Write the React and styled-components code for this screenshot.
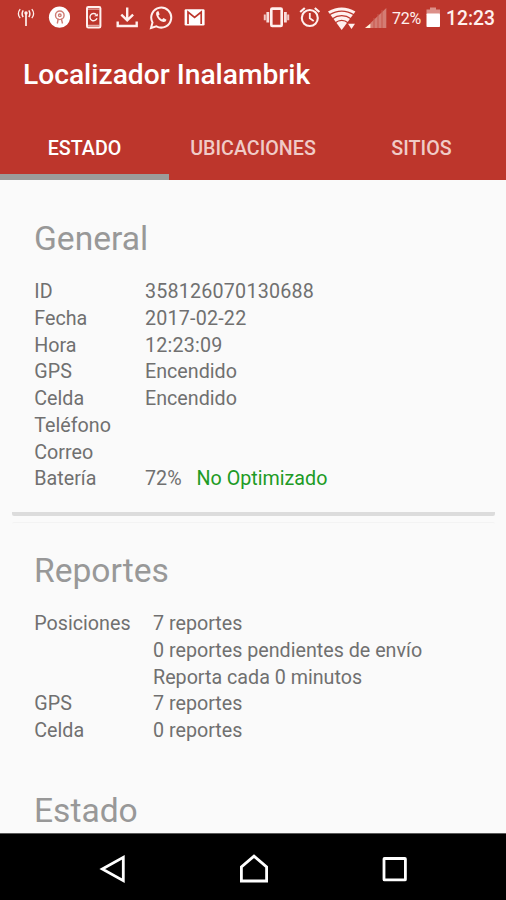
import React, { useState } from "react";
import styled, { createGlobalStyle } from "styled-components";

const GlobalStyle = createGlobalStyle`
    body {
        margin: 0;
        background: #fafafa;
        font-family: Roboto, "Liberation Sans", sans-serif;
    }
`;

/* Layout */
const Screen = styled.div`
    display: flex;
    flex-direction: column;
    width: 506px;
    height: 900px;
    overflow: hidden;
    background: #fafafa;
`;

const Header = styled.header`
    flex: none;
    height: 180px;
    background: #bd362c;
    color: #fff;
`;

const StatusBar = styled.div`
    display: flex;
    height: 36px;
`;

const Icon = styled.svg`
    flex: none;
    display: block;
    height: 36px;
    width: ${p => p.$w}px;
    margin-left: ${p => p.$gap || 0}px;
    fill: none;
    stroke: #fff0ee;
    stroke-width: 2;
`;

const StatusText = styled.span`
    box-sizing: border-box;
    width: ${p => p.$w}px;
    margin-left: ${p => p.$gap}px;
    padding-top: 1px;
    line-height: 36px;
    white-space: nowrap;
    color: #fff0ee;
    font-size: ${p => p.$size}px;
    font-weight: ${p => p.$weight || 400};
    letter-spacing: ${p => p.$track || 0}px;
`;

const Title = styled.h1`
    margin: 0;
    padding-left: 23px;
    height: 79px;
    line-height: 78px;
    font-size: 28.2px;
    font-weight: 500;
    white-space: nowrap;
`;

const Tabs = styled.nav`
    display: grid;
    grid-template-columns: 169px 168px 169px;
    height: 65px;
`;

const Tab = styled.button`
    box-sizing: border-box;
    padding: 8px 0 0;
    border: 0;
    border-bottom: 6px solid ${p => (p.$active ? "#9c9c9a" : "transparent")};
    background: none;
    color: ${p => (p.$active ? "#fff" : "#f0cbc7")};
    font: 500 19.7px/1 Roboto, sans-serif;
`;

const Content = styled.main`
    flex: 1;
    min-height: 0;
    overflow: hidden;
    padding: 10px 11px 0 12px;
`;

const Card = styled.section`
    box-sizing: border-box;
    height: ${p => p.$height}px;
    margin-bottom: ${p => p.$after}px;
    padding: 28px 22px 0;
    border-radius: 2px;
    border-top: 1px solid ${p => p.$edge || "#fafafa"};
    border-bottom: ${p => (p.$raised ? "4px solid #dcdcdc" : "0")};
`;

const Heading = styled.h2`
    margin: 0 0 20px;
    height: 40px;
    line-height: 40px;
    font-size: 33.6px;
    font-weight: 400;
    color: #989898;
`;

const Rows = styled.dl`
    display: grid;
    grid-template-columns: ${p => p.$label}px 1fr;
    grid-auto-rows: 26.7px;
    margin: 0;
    padding-top: 0.4px;
    font-size: 19.7px;
    line-height: 26.7px;
    color: #707070;
    white-space: nowrap;
`;

const Label = styled.dt`
    margin: 0;
    padding-left: 0.3px;
`;

const Value = styled.dd`
    margin: 0;
    letter-spacing: ${p => (p.$numeric ? 0.2 : 0)}px;
`;

const Good = styled.span`
    margin-left: 15px;
    color: #209b25;
`;

const NavBar = styled.footer`
    flex: none;
    display: flex;
    justify-content: space-between;
    align-items: center;
    box-sizing: border-box;
    height: 67px;
    padding: 4px 97px 0 99px;
    border-top: 1px solid #5a5a5a;
    background: #000;
`;

const NavButton = styled.button`
    padding: 0;
    border: 0;
    background: none;

    svg {
        display: block;
        width: 30px;
        height: 30px;
        fill: none;
        stroke: #fff;
        stroke-width: 2.8;
    }
`;

const tabs = ["ESTADO", "UBICACIONES", "SITIOS"];

const general = [
    ["ID", "358126070130688"],
    ["Fecha", "2017-02-22"],
    ["Hora", "12:23:09"],
    ["GPS", "Encendido"],
    ["Celda", "Encendido"],
    ["Teléfono", ""],
    ["Correo", ""],
    ["Batería", "72%", "No Optimizado"],
];

const reportes = [
    ["Posiciones", "7 reportes"],
    ["", "0 reportes pendientes de envío"],
    ["", "Reporta cada 0 minutos"],
    ["GPS", "7 reportes"],
    ["Celda", "0 reportes"],
];

const Status = function Status() {
    return <StatusBar>
        {/* antenna */}
        <Icon $w={18} $gap={17} viewBox="0 0 18 36">
            <path d="M3.2 9.2Q-0.4 13.7 3.2 18.2M14.8 9.2Q18.4 13.7 14.8 18.2" strokeWidth="1.3" />
            <path d="M6.2 10.3Q4 13.7 6.2 17M11.8 10.3Q14 13.7 11.8 17" strokeWidth="1.5" />
            <path d="M9 14V26" strokeWidth="1.7" />
            <circle cx="9" cy="13" r="1.7" fill="#fff0ee" stroke="none" />
        </Icon>
        {/* app badge */}
        <Icon $w={22} $gap={13} viewBox="0 0 22 36">
            <circle cx="11.5" cy="17.2" r="10.6" fill="#fff" stroke="none" />
            <g stroke="#cf7c74" strokeWidth="1.4">
                <circle cx="11.8" cy="15.3" r="4.3" />
                <circle cx="11.8" cy="15.3" r="1.3" />
                <path d="M10.3 18.5L9.3 23.5M13.3 18.5L14.5 23.5" />
            </g>
        </Icon>
        {/* phone */}
        <Icon $w={18} $gap={15} viewBox="0 0 18 36">
            <rect x="2" y="7" width="13.4" height="20.6" rx="1.3" strokeWidth="2" />
            <path d="M3 9.2H14.5M3 25.4H14.5" strokeWidth="1.2" opacity="0.6" />
            <path d="M11.2 14.6A3.6 3.6 0 1 0 12 18.2" strokeWidth="1.4" />
            <path d="M9 16.2H12.8V13.4Z" fill="#fff0ee" stroke="none" />
        </Icon>
        {/* download */}
        <Icon $w={24} $gap={13} viewBox="0 0 24 36">
            <path d="M11.2 7.5V20M5.3 14.7L11.2 20.4L17.1 14.7M1.7 21.5V26H20.7V21.5" strokeWidth="2.4" />
        </Icon>
        {/* whatsapp */}
        <Icon $w={24} $gap={9} viewBox="0 0 24 36">
            <path d="M2 28L3.5 22.4A10 10 0 1 1 7.4 26.3Z" strokeWidth="2" />
            <path d="M8.4 11.3Q6.4 12.5 7.2 15C8.3 18.7 11 21.3 14.6 22.1Q17 22.2 17.5 19.7L14.5 17.9L13 19.4Q10.6 18.3 9.3 15.8L10.6 14.4L9.6 11.3Z" fill="#fff0ee" stroke="none" />
        </Icon>
        {/* gmail */}
        <Icon $w={22} $gap={11} viewBox="0 0 22 36">
            <rect x="0.6" y="9.2" width="20" height="16.4" rx="1.3" fill="#fff" stroke="none" />
            <path d="M4 24V12L10.6 17.4L17.2 12V24" stroke="#bd362c" strokeWidth="1.7" />
        </Icon>
        {/* vibrate */}
        <Icon $w={27} $gap={57} viewBox="0 0 27 36">
            <rect x="8.3" y="8.6" width="10.4" height="17.4" rx="1" strokeWidth="2.6" />
            <path d="M4.8 12V22.6M22.4 12V22.6" strokeWidth="2.8" opacity="0.9" />
            <path d="M1.8 14.4V20.2M25.2 14.4V20.2" strokeWidth="2" opacity="0.8" />
        </Icon>
        {/* alarm */}
        <Icon $w={22} $gap={9} viewBox="0 0 22 36">
            <circle cx="10.8" cy="18" r="8" strokeWidth="2.1" />
            <path d="M10.8 13V18.3L14.7 20.9" strokeWidth="1.8" />
            <path d="M1.2 12L5.8 8M20.4 12L15.8 8" strokeWidth="2.2" />
        </Icon>
        {/* wifi */}
        <Icon $w={29} $gap={7} viewBox="0 0 29 36">
            <path d="M0 11.6Q13.7 3.2 27.4 11.6L13.7 30Z" fill="#fff0ee" stroke="none" />
            <g stroke="#bd362c" strokeWidth="1.3">
                <path d="M1 15Q13.7 7.2 26.4 15" />
                <path d="M4 19Q13.7 12.3 23.4 19" />
                <path d="M7 23Q13.7 17.8 20.4 23" />
            </g>
            <path d="M18.7 22.3H28.3L23.6 29.3Z" fill="#bd362c" stroke="none" />
            <path d="M20 23.7H27L23.5 29Z" fill="#fff0ee" stroke="none" />
        </Icon>
        {/* signal */}
        <Icon $w={23} $gap={8} viewBox="0 0 23 36">
            <path d="M21.3 8V28H5.5V23Z" fill="#d47c73" stroke="none" />
            <path d="M0 28L5.5 23.5V28Z" fill="#fff3dc" stroke="none" />
            <path d="M9 18V28M13 14V28M17 10V28" stroke="#c6564c" strokeWidth="1" />
        </Icon>
        <StatusText $w={31} $gap={4} $size={16} $track={-0.2}>72%</StatusText>
        {/* battery */}
        <Icon $w={15} $gap={3} viewBox="0 0 15 36">
            <path d="M4 7.5H10V9.5H14V14H0.5V9.5H4Z" fill="#dc9089" stroke="none" />
            <rect x="0.5" y="13.5" width="13.5" height="13.5" rx="0.8" fill="#fff" stroke="none" />
        </Icon>
        <StatusText $w={50} $gap={5} $size={19.3} $weight={500}>12:23</StatusText>
    </StatusBar>;
};

const Info = function Info({ rows, label }) {
    return <Rows $label={label}>
        {rows.map(([name, value, note], i) => <React.Fragment key={i}>
            <Label>{name}</Label>
            <Value $numeric={/^[\d:-]+$/.test(value)}>{value}{note && <Good>{note}</Good>}</Value>
        </React.Fragment>)}
    </Rows>;
};

const App = function App() {
    const [active, setActive] = useState("ESTADO");
    return <Screen>
        <GlobalStyle />
        <Header>
            <Status />
            <Title>Localizador Inalambrik</Title>
            <Tabs>
                {tabs.map(name => <Tab key={name}
                    $active={name === active}
                    onClick={() => setActive(name)}>
                    {name}
                </Tab>)}
            </Tabs>
        </Header>
        <Content>
            <Card $height={326} $after={6} $raised>
                <Heading>General</Heading>
                <Info rows={general} label={111} />
            </Card>
            <Card $height={233} $after={7} $edge="#f3f3f3">
                <Heading>Reportes</Heading>
                <Info rows={reportes} label={119} />
            </Card>
            <Card $height={100} $after={0}>
                <Heading>Estado</Heading>
            </Card>
        </Content>
        <NavBar>
            <NavButton aria-label="Atrás">
                <svg viewBox="0 0 30 30"><path d="M24.3 3.3V26.7L3.3 15Z" /></svg>
            </NavButton>
            <NavButton aria-label="Inicio">
                <svg viewBox="0 0 30 30"><path d="M2.4 27V13L15 2.2L27.6 13V27Z" /></svg>
            </NavButton>
            <NavButton aria-label="Recientes">
                <svg viewBox="0 0 30 30"><rect x="5" y="4.5" width="21.4" height="21.4" rx="0.5" /></svg>
            </NavButton>
        </NavBar>
    </Screen>;
};

export default App;
